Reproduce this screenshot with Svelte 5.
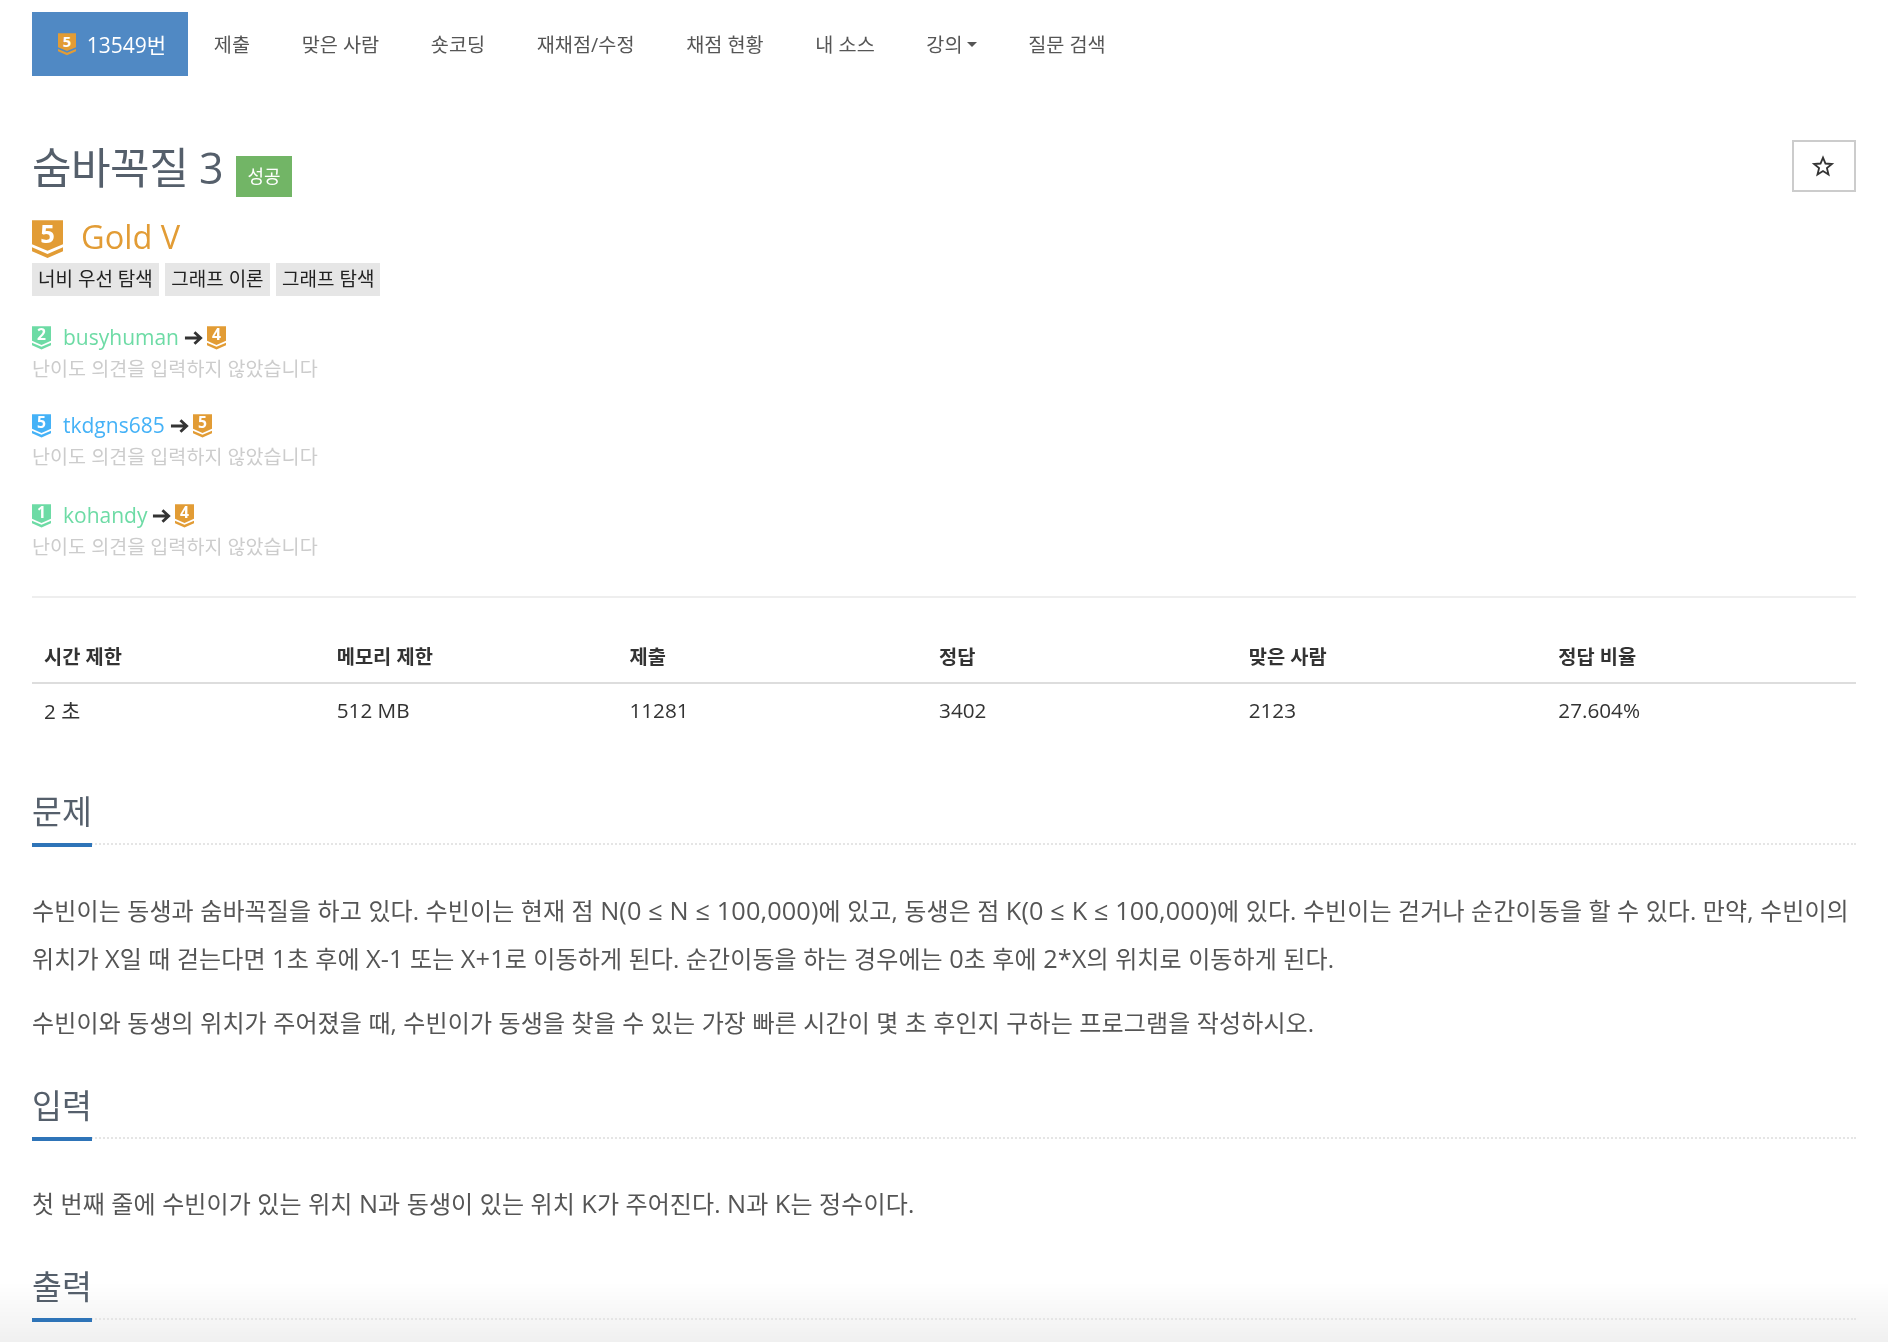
<script>
  const navItems = ["제출", "맞은 사람", "숏코딩", "재채점/수정", "채점 현황", "내 소스"];
  const tags = ["너비 우선 탐색", "그래프 이론", "그래프 탐색"];
  const opinions = [
    { name: "busyhuman", color: "#6ddba5", from: 2, fromColor: "#6ddba5", to: 4 },
    { name: "tkdgns685", color: "#45b2f7", from: 5, fromColor: "#45b2f7", to: 5 },
    { name: "kohandy", color: "#6ddba5", from: 1, fromColor: "#6ddba5", to: 4 }
  ];
  const gold = "#e29c35";
  const heads = ["시간 제한", "메모리 제한", "제출", "정답", "맞은 사람", "정답 비율"];
  const cells = ["2 초", "512 MB", "11281", "3402", "2123", "27.604%"];
</script>

{#snippet tier(n, color, cls)}
  <svg class={cls} viewBox="0 0 20 25" aria-hidden="true">
    <path d="M0 0H20V15.500L10 19.800 0 15.500Z" fill={color} />
    <path d="M0 17.500L10 21.800 20 17.500V20L10 24.500 0 20Z" fill={color} />
    <text x="10" y="15" text-anchor="middle" class="tier-num">{n}</text>
  </svg>
{/snippet}

<div class="page">
  <nav class="tabs">
    <a class="tab active">{@render tier(5, gold, "tier-nav")}13549번</a>
    {#each navItems as item}
      <a class="tab">{item}</a>
    {/each}
    <a class="tab">강의<span class="caret"></span></a>
    <a class="tab">질문 검색</a>
  </nav>

  <div class="title-row">
    <h1>숨바꼭질 3</h1>
    <span class="label">성공</span>
    <button class="star" aria-label="star">
      <svg viewBox="0 0 24 24" width="22" height="22">
        <path d="M12 2.800l2.700 6.500 7 .5-5.400 4.500 1.700 6.900-6-3.700-6 3.700 1.700-6.900-5.400-4.500 7-.5z" fill="none" stroke="#333" stroke-width="2" />
      </svg>
    </button>
  </div>

  <div class="tier-row">
    {@render tier(5, gold, "tier-big")}
    <span class="tier-name">Gold V</span>
  </div>

  <div class="tags">
    {#each tags as tag}
      <span class="tag">{tag}</span>
    {/each}
  </div>

  <div class="opinions">
    {#each opinions as op}
      <div class="opinion">
        <div class="who">
          {@render tier(op.from, op.fromColor, "tier-small")}
          <span class="name" style="color: {op.color}">{op.name}</span>
          <svg class="arrow" viewBox="0 0 20 16" width="19" height="16">
            <path d="M1 8H17M11 2l6.500 6-6.500 6" fill="none" stroke="#333" stroke-width="3" />
          </svg>
          {@render tier(op.to, gold, "tier-small")}
        </div>
        <div class="none">난이도 의견을 입력하지 않았습니다</div>
      </div>
    {/each}
  </div>

  <hr />

  <table>
    <thead>
      <tr>
        {#each heads as h}<th>{h}</th>{/each}
      </tr>
    </thead>
    <tbody>
      <tr>
        {#each cells as c}<td>{c}</td>{/each}
      </tr>
    </tbody>
  </table>

  <section class="first">
    <div class="headline"><h2>문제</h2></div>
    <p>수빈이는 동생과 숨바꼭질을 하고 있다. 수빈이는 현재 점 <span class="en">N(0 ≤ N ≤ 100,000)</span>에 있고, 동생은 점 <span class="en">K(0 ≤ K ≤ 100,000)</span>에 있다. 수빈이는 걷거나 순간이동을 할 수 있다. 만약, 수빈이의 위치가 <span class="en">X</span>일 때 걷는다면 <span class="en">1</span>초 후에 <span class="en">X-1</span> 또는 <span class="en">X+1</span>로 이동하게 된다. 순간이동을 하는 경우에는 <span class="en">0</span>초 후에 <span class="en">2*X</span>의 위치로 이동하게 된다.</p>
    <p>수빈이와 동생의 위치가 주어졌을 때, 수빈이가 동생을 찾을 수 있는 가장 빠른 시간이 몇 초 후인지 구하는 프로그램을 작성하시오.</p>
  </section>

  <section>
    <div class="headline"><h2>입력</h2></div>
    <p class="tight">첫 번째 줄에 수빈이가 있는 위치 <span class="en">N</span>과 동생이 있는 위치 <span class="en">K</span>가 주어진다. <span class="en">N</span>과 <span class="en">K</span>는 정수이다.</p>
  </section>

  <section>
    <div class="headline"><h2>출력</h2></div>
  </section>
</div>

<div class="fade"></div>

<style>
  :global(body) {
    margin: 0;
    background: #fff;
    font-family: "Open Sans", "Noto Sans CJK KR", sans-serif;
    color: #555;
    overflow: hidden;
  }

  .page {
    position: relative;
    z-index: 1;
    padding: 12px 32px 0;
    height: 1330px;
    overflow: hidden;
  }

  .tabs {
    display: flex;
    height: 64px;
  }

  .tab {
    display: flex;
    align-items: center;
    padding: 0 25.800px 2px;
    font-size: 19.700px;
    color: #555;
  }

  .tab.active {
    width: 156px;
    box-sizing: border-box;
    padding-bottom: 0;
    background: #5089c4;
    color: #fff;
    font-size: 21px;
    white-space: nowrap;
  }

  .tier-nav {
    flex: none;
    width: 18px;
    height: 23px;
    margin-right: 11px;
  }

  .tier-num {
    font-family: "Open Sans", sans-serif;
    font-weight: 700;
    font-size: 16.500px;
    fill: #fff;
  }

  svg {
    overflow: visible;
  }

  .caret {
    display: inline-block;
    margin-left: 4px;
    margin-top: 3px;
    border-top: 5px solid #555;
    border-left: 5px solid transparent;
    border-right: 5px solid transparent;
  }

  .title-row {
    display: flex;
    align-items: flex-start;
    margin-top: 64px;
    height: 78px;
  }

  h1 {
    margin: 0;
    font-size: 43px;
    line-height: 56px;
    font-weight: 400;
    color: #555f6b;
    letter-spacing: -0.5px;
  }

  .label {
    margin: 16px 0 0 13px;
    width: 56px;
    height: 41px;
    line-height: 41px;
    text-align: center;
    background: #72b566;
    color: #fff;
    font-size: 18px;
  }

  .star {
    margin-left: auto;
    margin-top: 0;
    width: 64px;
    height: 52px;
    padding: 0 2px 0 0;
    display: flex;
    align-items: center;
    justify-content: center;
    background: #fff;
    border: 2px solid #ccc;
  }

  .tier-row {
    display: flex;
    align-items: flex-start;
    height: 43px;
    margin-top: 2px;
  }

  .tier-big {
    width: 31px;
    height: 39px;
  }

  .tier-name {
    margin-left: 18px;
    font-size: 32.500px;
    line-height: 34px;
    color: #e29c35;
  }

  .tags {
    display: flex;
    gap: 6.500px;
  }

  .tag {
    padding: 0 6px;
    height: 33px;
    line-height: 33px;
    background: #e6e6e6;
    color: #222;
    font-size: 19px;
  }

  .opinions {
    margin-top: 26px;
    display: flex;
    flex-direction: column;
    gap: 25px;
  }

  .opinion:last-child {
    margin-top: 2px;
  }

  .who {
    display: flex;
    align-items: center;
    height: 31px;
  }

  .tier-small {
    width: 19px;
    height: 24px;
  }

  .name {
    margin: -2px 5px 0 12px;
    font-size: 21px;
  }

  .arrow {
    margin-right: 4px;
  }

  .none {
    font-size: 19.600px;
    line-height: 32px;
    color: #ccc;
  }

  hr {
    margin: 33px 0 0;
    border: 0;
    border-top: 2px solid #eee;
  }

  table {
    width: 100%;
    margin-top: 36px;
    border-collapse: collapse;
    table-layout: fixed;
    font-size: 20.700px;
    color: #333;
  }

  th {
    width: 17%;
    padding: 0 12px 5px;
    height: 43px;
    text-align: left;
    font-weight: 700;
    font-size: 19.800px;
    border-bottom: 2px solid #ddd;
  }

  th:nth-child(1),
  th:nth-child(2) {
    width: 16%;
  }

  td {
    padding: 0 12px;
    height: 52px;
    font-weight: 400;
  }

  section {
    margin-top: 31px;
  }

  section.first {
    margin-top: 48px;
  }

  .headline {
    height: 59px;
    border-bottom: 2px dotted #e5e5e5;
  }

  h2 {
    display: inline-block;
    margin: 0 0 -5px;
    height: 59px;
    line-height: 56px;
    font-size: 32.500px;
    font-weight: 400;
    color: #555f6b;
    border-bottom: 4px solid #2e74b8;
  }

  p {
    margin: 0;
    font-size: 24px;
    line-height: 48px;
    color: #555;
    letter-spacing: 0.13px;
    word-break: keep-all;
  }

  .en {
    font-size: 25.300px;
    line-height: 1;
  }

  .headline + p {
    margin-top: 42px;
  }

  .headline + p.tight {
    margin-top: 41px;
  }

  p + p {
    margin-top: 16px;
  }

  .fade {
    position: fixed;
    left: 0;
    right: 0;
    bottom: 0;
    height: 60px;
    background: linear-gradient(to bottom, rgba(240, 240, 240, 0), #f0f0f0);
    pointer-events: none;
  }
</style>
